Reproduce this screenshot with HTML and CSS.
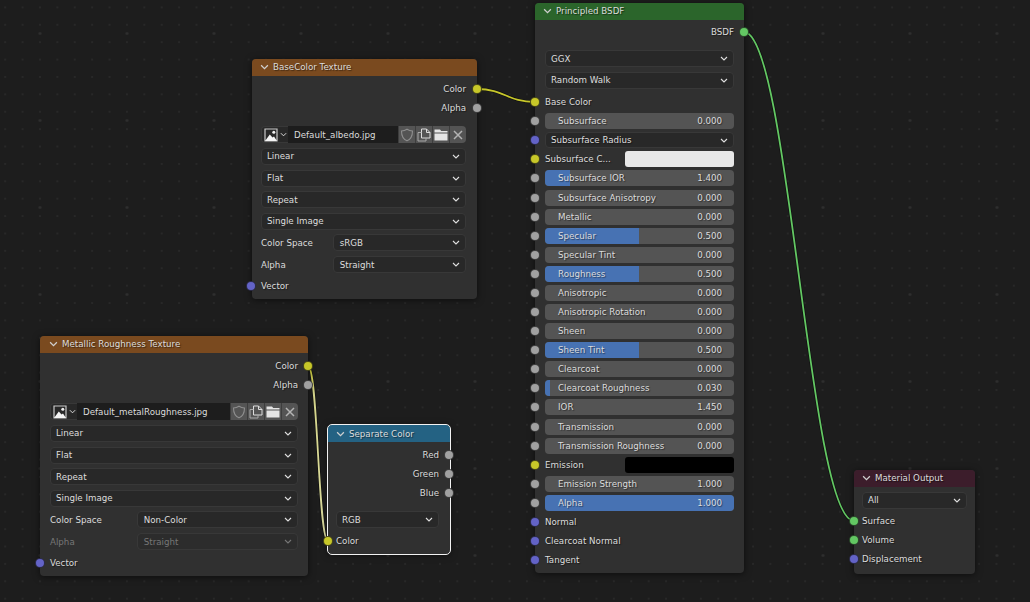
FILE: index.html
```html
<!DOCTYPE html>
<html lang="en">
<head>
    <meta charset="UTF-8">
    <meta name="viewport" content="width=device-width, initial-scale=1.0">
    <title>Shader Nodes</title>
    <link rel="stylesheet" href="styles.css">
</head>
<body>
    <svg class="icon-defs" width="0" height="0">
        <symbol id="chev" viewBox="0 0 8 5"><path d="M1 1l3 3 3-3" fill="none" stroke="currentColor" stroke-width="1.1"/></symbol>
        <symbol id="image" viewBox="0 0 14 14"><path d="M1 1h12v12H1z" fill="none" stroke="#c8c8c8" stroke-width="1.200"/><path d="M1 13l4.800-6.500 2.700 3 1.500-1 3 4.500z" fill="#f4f4f4"/><circle cx="9.800" cy="4.200" r="1.500" fill="#f0f0f0"/></symbol>
        <symbol id="shield" viewBox="0 0 14 14"><path d="M7 1.200c1.700 1.100 3.400 1.700 5.500 1.800 0 5.500-1.700 8.300-5.500 9.800C3.200 11.300 1.500 8.500 1.500 3c2.100-.1 3.800-.7 5.500-1.800z" fill="none" stroke="#8f8f8f" stroke-width="1.100"/></symbol>
        <symbol id="copy" viewBox="0 0 14 14"><path d="M4.500 10V1h5l3.500 3.500V10z" fill="none" stroke="#dcdcdc"/><path d="M9.500 1v3.500H13" fill="none" stroke="#dcdcdc"/><path d="M4.500 4.500H1V13h8v-3" fill="none" stroke="#a8a8a8"/></symbol>
        <symbol id="folder" viewBox="0 0 14 14"><path d="M.5 1.500h5.500l1.200 1.500h6.300v1.500H.5z" fill="#e4e4e4"/><path d="M.5 5.500h13v7H.5z" fill="#e4e4e4"/></symbol>
        <symbol id="cross" viewBox="0 0 14 14"><path d="M3 3l8 8M11 3l-8 8" fill="none" stroke="#b4b4b4" stroke-width="1.500"/></symbol>
    </svg>

    <!-- Wires between sockets -->
    <svg class="wires" width="1030" height="602">
        <defs>
            <linearGradient id="wireSelected" x1="0" y1="0" x2="0" y2="1">
                <stop offset="0" stop-color="#c7c72b"/>
                <stop offset="0.15" stop-color="#d6d68c"/>
                <stop offset="1" stop-color="#dcdca0"/>
            </linearGradient>
        </defs>
        <path class="wire-under" d="M477 89C505 89 507 102 535 102"/>
        <path class="wire" stroke="#c7c72b" d="M477 89C505 89 507 102 535 102"/>
        <path class="wire-under" d="M308 366C318 366 318 541 328 541"/>
        <path class="wire" stroke="url(#wireSelected)" d="M308 366C318 366 318 541 328 541"/>
        <path class="wire-under" d="M744 32C789 32 809 521 854 521"/>
        <path class="wire" stroke="#63c763" d="M744 32C789 32 809 521 854 521"/>
    </svg>

    <!-- BaseColor Texture -->
    <div class="node node-base">
        <div class="node-head head-orange"><svg class="head-chev"><use href="#chev"/></svg>BaseColor Texture</div>
        <div class="node-body">
            <div class="row row-out">Color<i class="sock out yellow"></i></div>
            <div class="row row-out">Alpha<i class="sock out gray"></i></div>
            <div class="stack">
                <div class="img-row">
                    <div class="img-pick"><svg class="ico"><use href="#image"/></svg><svg class="chev"><use href="#chev"/></svg></div>
                    <div class="img-name">Default_albedo.jpg</div>
                    <div class="img-btn"><svg class="ico"><use href="#shield"/></svg></div>
                    <div class="img-btn"><svg class="ico"><use href="#copy"/></svg></div>
                    <div class="img-btn"><svg class="ico"><use href="#folder"/></svg></div>
                    <div class="img-btn"><svg class="ico"><use href="#cross"/></svg></div>
                </div>
                <div class="sel">Linear<svg class="chev"><use href="#chev"/></svg></div>
                <div class="sel">Flat<svg class="chev"><use href="#chev"/></svg></div>
                <div class="sel">Repeat<svg class="chev"><use href="#chev"/></svg></div>
                <div class="sel">Single Image<svg class="chev"><use href="#chev"/></svg></div>
                <div class="prop"><span>Color Space</span><div class="sel">sRGB<svg class="chev"><use href="#chev"/></svg></div></div>
                <div class="prop"><span>Alpha</span><div class="sel">Straight<svg class="chev"><use href="#chev"/></svg></div></div>
            </div>
            <div class="row row-last"><i class="sock in blue"></i>Vector</div>
        </div>
    </div>

    <!-- Metallic Roughness Texture -->
    <div class="node node-metal">
        <div class="node-head head-orange"><svg class="head-chev"><use href="#chev"/></svg>Metallic Roughness Texture</div>
        <div class="node-body">
            <div class="row row-out">Color<i class="sock out yellow"></i></div>
            <div class="row row-out">Alpha<i class="sock out gray"></i></div>
            <div class="stack">
                <div class="img-row">
                    <div class="img-pick"><svg class="ico"><use href="#image"/></svg><svg class="chev"><use href="#chev"/></svg></div>
                    <div class="img-name">Default_metalRoughness.jpg</div>
                    <div class="img-btn"><svg class="ico"><use href="#shield"/></svg></div>
                    <div class="img-btn"><svg class="ico"><use href="#copy"/></svg></div>
                    <div class="img-btn"><svg class="ico"><use href="#folder"/></svg></div>
                    <div class="img-btn"><svg class="ico"><use href="#cross"/></svg></div>
                </div>
                <div class="sel">Linear<svg class="chev"><use href="#chev"/></svg></div>
                <div class="sel">Flat<svg class="chev"><use href="#chev"/></svg></div>
                <div class="sel">Repeat<svg class="chev"><use href="#chev"/></svg></div>
                <div class="sel">Single Image<svg class="chev"><use href="#chev"/></svg></div>
                <div class="prop"><span>Color Space</span><div class="sel">Non-Color<svg class="chev"><use href="#chev"/></svg></div></div>
                <div class="prop prop-off"><span>Alpha</span><div class="sel">Straight<svg class="chev"><use href="#chev"/></svg></div></div>
            </div>
            <div class="row row-last"><i class="sock in blue"></i>Vector</div>
        </div>
    </div>

    <!-- Separate Color -->
    <div class="node node-sep">
        <div class="node-head head-blue"><svg class="head-chev"><use href="#chev"/></svg>Separate Color</div>
        <div class="node-body">
            <div class="row row-out">Red<i class="sock out gray"></i></div>
            <div class="row row-out">Green<i class="sock out gray"></i></div>
            <div class="row row-out">Blue<i class="sock out gray"></i></div>
            <div class="stack">
                <div class="sel">RGB<svg class="chev"><use href="#chev"/></svg></div>
            </div>
            <div class="row row-tight"><i class="sock in yellow"></i>Color</div>
        </div>
    </div>

    <!-- Principled BSDF -->
    <div class="node node-bsdf">
        <div class="node-head head-green"><svg class="head-chev"><use href="#chev"/></svg>Principled BSDF</div>
        <div class="node-body">
            <div class="row row-out">BSDF<i class="sock out green"></i></div>
            <div class="stack">
                <div class="sel">GGX<svg class="chev"><use href="#chev"/></svg></div>
                <div class="sel">Random Walk<svg class="chev"><use href="#chev"/></svg></div>
            </div>
            <div class="inputs">
                <div class="row"><i class="sock in yellow"></i>Base Color</div>
                <div class="row"><i class="sock in gray"></i><div class="num"><span>Subsurface</span><span>0.000</span></div></div>
                <div class="row"><i class="sock in blue"></i><div class="sel">Subsurface Radius<svg class="chev"><use href="#chev"/></svg></div></div>
                <div class="row color-row"><i class="sock in yellow"></i><span>Subsurface C...</span><div class="swatch swatch-white"></div></div>
                <div class="row"><i class="sock in gray"></i><div class="num"><b style="width: 13%"></b><span>Subsurface IOR</span><span>1.400</span></div></div>
                <div class="row"><i class="sock in gray"></i><div class="num"><span>Subsurface Anisotropy</span><span>0.000</span></div></div>
                <div class="row"><i class="sock in gray"></i><div class="num"><span>Metallic</span><span>0.000</span></div></div>
                <div class="row"><i class="sock in gray"></i><div class="num"><b style="width: 49.500%"></b><span>Specular</span><span>0.500</span></div></div>
                <div class="row"><i class="sock in gray"></i><div class="num"><span>Specular Tint</span><span>0.000</span></div></div>
                <div class="row"><i class="sock in gray"></i><div class="num"><b style="width: 49.500%"></b><span>Roughness</span><span>0.500</span></div></div>
                <div class="row"><i class="sock in gray"></i><div class="num"><span>Anisotropic</span><span>0.000</span></div></div>
                <div class="row"><i class="sock in gray"></i><div class="num"><span>Anisotropic Rotation</span><span>0.000</span></div></div>
                <div class="row"><i class="sock in gray"></i><div class="num"><span>Sheen</span><span>0.000</span></div></div>
                <div class="row"><i class="sock in gray"></i><div class="num"><b style="width: 49.500%"></b><span>Sheen Tint</span><span>0.500</span></div></div>
                <div class="row"><i class="sock in gray"></i><div class="num"><span>Clearcoat</span><span>0.000</span></div></div>
                <div class="row"><i class="sock in gray"></i><div class="num"><b style="width: 2.500%"></b><span>Clearcoat Roughness</span><span>0.030</span></div></div>
                <div class="row"><i class="sock in gray"></i><div class="num"><span>IOR</span><span>1.450</span></div></div>
                <div class="row"><i class="sock in gray"></i><div class="num"><span>Transmission</span><span>0.000</span></div></div>
                <div class="row"><i class="sock in gray"></i><div class="num"><span>Transmission Roughness</span><span>0.000</span></div></div>
                <div class="row color-row"><i class="sock in yellow"></i><span>Emission</span><div class="swatch swatch-black"></div></div>
                <div class="row"><i class="sock in gray"></i><div class="num"><span>Emission Strength</span><span>1.000</span></div></div>
                <div class="row"><i class="sock in gray"></i><div class="num"><b style="width: 100%"></b><span>Alpha</span><span>1.000</span></div></div>
                <div class="row"><i class="sock in blue"></i>Normal</div>
                <div class="row"><i class="sock in blue"></i>Clearcoat Normal</div>
                <div class="row"><i class="sock in blue"></i>Tangent</div>
            </div>
        </div>
    </div>

    <!-- Material Output -->
    <div class="node node-out">
        <div class="node-head head-wine"><svg class="head-chev"><use href="#chev"/></svg>Material Output</div>
        <div class="node-body">
            <div class="sel">All<svg class="chev"><use href="#chev"/></svg></div>
            <div class="row row-first"><i class="sock in green"></i>Surface</div>
            <div class="row"><i class="sock in green"></i>Volume</div>
            <div class="row"><i class="sock in blue"></i>Displacement</div>
        </div>
    </div>
</body>
</html>
```

FILE: styles.css
```css
html, body {
    height: 100%;
}
body {
    margin: 0;
    position: relative;
    overflow: hidden;
    font-family: "DejaVu Sans", sans-serif;
    font-size: 8.7px;
    color: #dcdcdc;
    background-color: #1d1d1d;
    background-image:
        radial-gradient(circle, #2e2e2e 1.2px, transparent 1.6px),
        radial-gradient(circle, #282828 0.7px, transparent 1px);
    background-size: 87px 87px, 17.4px 17.4px;
    background-position: -3.5px -10px, -3.5px -1.3px;
}
.icon-defs {
    position: absolute;
}

/* wires */
.wires {
    position: absolute;
    left: 0;
    top: 0;
}
.wire, .wire-under {
    fill: none;
}
.wire {
    stroke-width: 1.8;
}
.wire-under {
    stroke: #000;
    stroke-opacity: 0.45;
    stroke-width: 3.2;
}

/* nodes sit on a free canvas */
.node {
    position: absolute;
    background: #303030;
    border-radius: 4px;
    box-shadow: 0 1px 7px rgba(0, 0, 0, 0.55);
}
.node-base { left: 252px; top: 59px; width: 225px; }
.node-metal { left: 40px; top: 336px; width: 268px; }
.node-sep {
    left: 328px;
    top: 425px;
    width: 122px;
    outline: 1px solid #f2f2f2;
}
.node-bsdf { left: 535px; top: 3px; width: 209px; }
.node-out { left: 854px; top: 470px; width: 121px; }

.node-head {
    height: 17px;
    box-sizing: border-box;
    display: flex;
    align-items: center;
    padding: 0 0 2px 8px;
    border-radius: 4px 4px 0 0;
    text-shadow: 1px 1px 1px rgba(0, 0, 0, 0.5);
}
.node-metal .node-head { padding-left: 9px; }
.node-sep .node-head { padding-bottom: 0; }
.head-orange { background: #7a4a1f; }
.head-blue { background: #246283; }
.head-green { background: #2b652b; }
.head-wine { background: #3c1d2b; }
.head-chev {
    width: 9px;
    height: 6px;
    margin-right: 4px;
    color: #d0d0d0;
}

.node-body {
    padding: 3.5px 11px 3.5px 9px;
}
.node-metal .node-body { padding-left: 10px; padding-right: 10px; }
.node-sep .node-body { padding-left: 8px; }
.node-bsdf .node-body { padding: 2.5px 10px 3.5px; }
.node-out .node-body { padding: 4.5px 8px 5.5px; }

/* rows and sockets */
.row {
    position: relative;
    height: 19px;
    display: flex;
    align-items: center;
    text-shadow: 1px 1px 1px rgba(0, 0, 0, 0.45);
}
.row-out {
    justify-content: flex-end;
}
.row-last {
    margin-top: 3.500px;
}
.row-tight {
    margin-top: 3.500px;
}
.row-first {
    margin-top: 3px;
}
.sock {
    position: absolute;
    top: 50%;
    width: 8px;
    height: 8px;
    margin-top: -5px;
    border: 1px solid rgba(20, 20, 20, 0.7);
    border-radius: 50%;
}
.sock.in { left: -15px; }
.sock.out { right: -16px; }
.node-metal .sock.out { right: -15px; }
.node-sep .sock.in { left: -13.300px; }
.node-sep .sock.out { right: -15px; }
.node-bsdf .sock.out { right: -15px; }
.node-out .sock.in { left: -13.300px; }
.yellow { background: #c7c729; }
.gray { background: #a1a1a1; }
.blue { background: #6363c7; }
.green { background: #63c763; }

/* widgets */
.stack {
    display: flex;
    flex-direction: column;
    gap: 4.670px;
    margin-top: 8.700px;
}
.sel {
    height: 17px;
    display: flex;
    align-items: center;
    justify-content: space-between;
    padding: 0 5px;
    background: #282828;
    border: 1px solid #383838;
    border-radius: 4px;
    box-sizing: border-box;
    color: #dedede;
}
.prop .sel {
    padding-left: 6px;
}
.chev {
    width: 8px;
    height: 5px;
    color: #e0e0e0;
}
.prop {
    display: grid;
    grid-template-columns: 35% 65%;
    align-items: center;
    height: 17px;
}
.prop-off {
    color: #777;
}
.prop-off .sel {
    color: #777;
    background: #2c2c2c;
}
.prop-off .chev {
    color: #777;
}

.img-row {
    display: flex;
    height: 17px;
}
.img-pick {
    width: 27px;
    display: flex;
    align-items: center;
    gap: 2px;
    padding-left: 2px;
    box-sizing: border-box;
    background: #282828;
    border: 1px solid #383838;
    border-right: none;
    border-radius: 4px 0 0 4px;
}
.img-pick .chev {
    width: 7px;
}
.img-name {
    flex: 1;
    display: flex;
    align-items: center;
    padding-left: 6px;
    background: #1d1d1d;
}
.img-btn {
    width: 17px;
    display: flex;
    align-items: center;
    justify-content: center;
    background: #545454;
    border-left: 1px solid #3d3d3d;
    box-sizing: border-box;
}
.img-btn:last-child {
    border-radius: 0 4px 4px 0;
}
.ico {
    width: 14px;
    height: 14px;
}

.inputs {
    margin-top: 3.800px;
}
.inputs .row {
    height: 19.080px;
}
.num {
    position: relative;
    flex: 1;
    height: 16px;
    display: flex;
    align-items: center;
    justify-content: space-between;
    padding: 0 12px 0 13px;
    background: #545454;
    border-radius: 4px;
    overflow: hidden;
}
.num span {
    position: relative;
}
.num b {
    position: absolute;
    left: 0;
    top: 0;
    bottom: 0;
    background: #4772b3;
}
.inputs .sel {
    flex: 1;
    height: 16px;
}
.color-row span {
    width: 80px;
}
.swatch {
    flex: 1;
    height: 16px;
    border-radius: 3px;
}
.swatch-white { background: #e8e8e8; }
.swatch-black { background: #000; }
```
